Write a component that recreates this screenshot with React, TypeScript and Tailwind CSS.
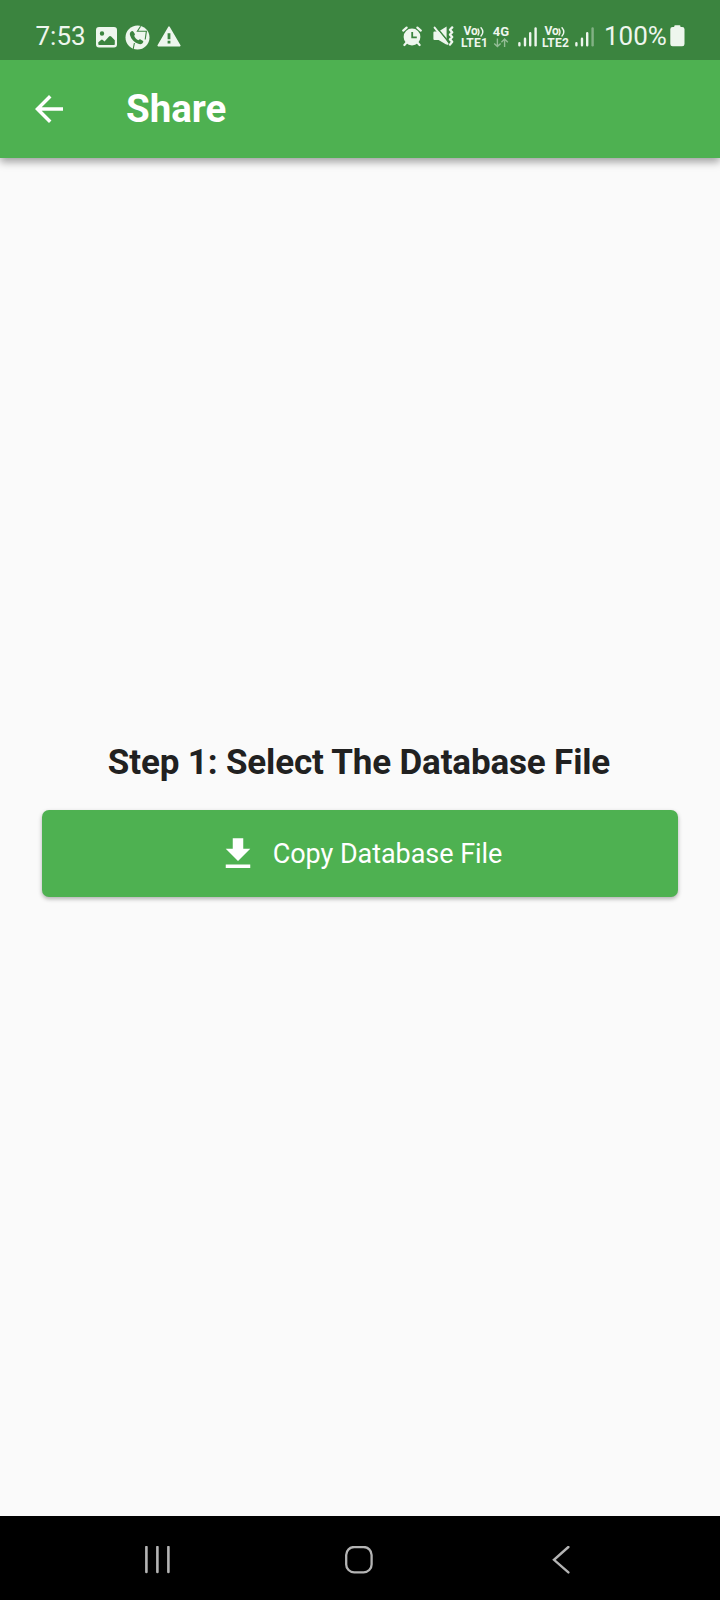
import React from 'react';

const ink = '#eef6ee';

function ImageIcon() {
  return (
    <svg width="21" height="21" viewBox="0 0 21 21" className="mt-[26.5px] ml-[12px] shrink-0">
      <path
        fill={ink}
        fillRule="evenodd"
        d="M3 0H18a3 3 0 0 1 3 3V17.5a3 3 0 0 1-3 3H3a3 3 0 0 1-3-3V3a3 3 0 0 1 3-3ZM6 4.3a2.2 2.2 0 1 0 0 4.4a2.2 2.2 0 0 0 0-4.4ZM2.3 15.2V17.2Q2.3 18 3.1 18H18Q18.8 18 18.8 17.2V13.2L15.2 9.6Q14 8.6 12.8 9.7L8.5 14.4L6.8 12.9Q5.9 12.2 5 13Z"
      />
    </svg>
  );
}

function CallIcon() {
  return (
    <svg width="25" height="25" viewBox="0 0 25 25" className="mt-[24.5px] ml-[8px] shrink-0">
      <circle cx="12.5" cy="12.5" r="12" fill={ink} />
      <path
        fill="#3b843f"
        transform="translate(0.8 0.4) scale(0.92)"
        d="M5.2 7.2C6.5 5.7 7.6 5.6 8.3 6.8L9.7 9.2C10.1 10 9.9 10.5 9.1 11.3C10 13.6 11.4 15.1 13.8 16.1C14.7 15.1 15.3 14.9 16 15.3L18.4 16.8C19.4 17.5 19.3 18.5 17.9 19.6C16.7 20.5 15.3 20.7 13.6 20C9 18.2 6 15 4.7 10.9C4.2 9.3 4.3 8.2 5.2 7.2Z"
      />
      <path
        d="M9.4 18L8.2 24M15.6 1.2L12.4 6.2H21.4L20.2 14.5"
        fill="none"
        stroke="#3b843f"
        strokeWidth="1.1"
      />
    </svg>
  );
}

function WarningIcon() {
  return (
    <svg width="24" height="21" viewBox="0 0 24 21" className="mt-[26.3px] ml-[7px] shrink-0">
      <path d="M12 1.2L22.8 19.6H1.2Z" fill={ink} stroke={ink} strokeWidth="1.6" strokeLinejoin="round" />
      <path d="M12 7.2V13.2M12 14.8V17.4" stroke="#3b843f" strokeWidth="2.8" />
    </svg>
  );
}

function AlarmIcon() {
  return (
    <svg width="20" height="21" viewBox="0 0 20 21" className="mt-[26px] shrink-0">
      <circle cx="10" cy="11" r="8.4" fill={ink} />
      <path
        d="M1.2 4.6L4.6 1.6M18.8 4.6L15.4 1.6M4.6 16.5L2.4 19M15.4 16.5L17.6 19"
        stroke={ink}
        strokeWidth="2.2"
        strokeLinecap="round"
      />
      <path d="M10.2 6V11.4H14.8" fill="none" stroke="#3b843f" strokeWidth="1.8" />
    </svg>
  );
}

function MuteIcon() {
  return (
    <svg width="21" height="21" viewBox="0 0 21 21" className="mt-[26.3px] ml-[10.5px] shrink-0">
      <path d="M0.4 6.6Q0.4 5.6 1.4 5.6H5.6L13.6 0.6V18.8L5.6 14H1.4Q0.4 14 0.4 13Z" fill={ink} />
      <path d="M3.4 1.2L15.2 15.4" stroke="#3b843f" strokeWidth="1.6" />
      <path d="M1.6 1.6L14.6 17.8" stroke={ink} strokeWidth="2" strokeLinecap="round" />
      <path
        d="M19.2 1.4L17 3.8L19.2 6.2L17 8.6L19.2 11L17 13.4L19.2 15.8L17 18.6"
        fill="none"
        stroke={ink}
        strokeWidth="2.3"
        strokeLinecap="round"
        strokeLinejoin="round"
      />
    </svg>
  );
}

function VoLte({ label }: { label: string }) {
  return (
    <div className="mt-[25.5px] flex w-[27px] shrink-0 flex-col items-center text-[12px] leading-[11px] font-bold whitespace-nowrap">
      <div className="flex h-[11px] items-start tracking-[-0.2px]">
        <span>Vo</span>
        <svg width="8" height="11" viewBox="0 0 8 11">
          <path
            d="M1 3Q3 6 1 9M4 1.8Q7.6 6 4 10"
            fill="none"
            stroke={ink}
            strokeWidth="1.4"
            strokeLinecap="round"
          />
        </svg>
      </div>
      <div className="mt-px h-[11px] tracking-[0.2px]">{label}</div>
    </div>
  );
}

function Signal({ faded }: { faded: boolean }) {
  return (
    <svg width="19" height="20" viewBox="0 0 19 20" className="mt-[26.8px] shrink-0">
      <g stroke={ink} strokeWidth="2.4" strokeLinecap="round">
        <path d="M1.4 16.2V18.2M7 11.8V18.2M12.2 6.2V18.2" />
        <path d="M17.6 1.4V18.2" opacity={faded ? 0.4 : 1} />
      </g>
    </svg>
  );
}

function StatusBar() {
  return (
    <div className="relative z-10 flex h-[60px] items-start bg-[#3b843f] pl-[35.5px] text-[#eef6ee]">
      <span className="mt-[21px] w-[48.5px] text-[26px] leading-[31px] whitespace-nowrap">7:53</span>
      <ImageIcon />
      <CallIcon />
      <WarningIcon />
      <div className="ml-auto flex items-start pr-[35px]">
        <AlarmIcon />
        <MuteIcon />
        <div className="ml-[7.5px]">
          <VoLte label="LTE1" />
        </div>
        <div className="mt-[25.5px] ml-[4.5px] flex w-[17px] flex-col items-center text-[13px] leading-[11px] font-bold">
          <span>4G</span>
          <svg width="16" height="10" viewBox="0 0 16 10" className="mt-px">
            <path
              d="M4.4 0.5V8.4M1.2 5.4L4.4 8.6L7.6 5.4M11.6 9V1.2M8.4 4.2L11.6 1L14.8 4.2"
              fill="none"
              stroke={ink}
              strokeWidth="1.4"
              opacity="0.5"
            />
          </svg>
        </div>
        <div className="ml-[8.5px]">
          <Signal faded={false} />
        </div>
        <div className="ml-[5px]">
          <VoLte label="LTE2" />
        </div>
        <div className="ml-[5.5px]">
          <Signal faded />
        </div>
        <span className="mt-[21px] ml-[10.5px] w-[62px] text-[26px] leading-[31px] whitespace-nowrap">100%</span>
        <svg width="15" height="22" viewBox="0 0 15 22" className="mt-[25.3px] ml-[4px] shrink-0">
          <path
            d="M4.2 2V1.4Q4.2 0.3 5.3 0.3H9.4Q10.5 0.3 10.5 1.4V2H12.2Q14.5 2 14.5 4.3V19Q14.5 21.3 12.2 21.3H2.6Q0.3 21.3 0.3 19V4.3Q0.3 2 2.6 2Z"
            fill={ink}
          />
        </svg>
      </div>
    </div>
  );
}

export default function App() {
  return (
    <div className="flex h-[1600px] w-[720px] flex-col overflow-hidden bg-[#fafafa] font-[Roboto,sans-serif]">
      <StatusBar />
      <header className="flex h-[98px] items-center bg-[#4eb151] pl-[28px] text-white shadow-[0_4px_8px_rgba(0,0,0,0.36)]">
        <svg width="42" height="42" viewBox="0 0 24 24" fill="currentColor">
          <path d="M20 11H7.83l5.59-5.59L12 4l-8 8 8 8 1.41-1.41L7.83 13H20v-2z" />
        </svg>
        <h1 className="ml-[56px] text-[38.5px] leading-[44px] font-bold">Share</h1>
      </header>
      <main className="flex flex-1 flex-col items-stretch px-[42px] pt-[584px]">
        <h2 className="pr-[2px] text-center text-[35px] leading-[42px] font-bold tracking-[-0.16px] whitespace-nowrap text-[#212121]">
          Step 1: Select The Database File
        </h2>
        <button className="mt-[26px] flex h-[87px] items-center justify-center rounded-[7px] bg-[#4eb151] pr-px text-white shadow-[0_2px_4px_rgba(0,0,0,0.3)]">
          <svg width="42" height="42" viewBox="0 0 24 24" fill="currentColor">
            <path d="M19 9h-4V3H9v6H5l7 7 7-7zM5 18v2h14v-2H5z" />
          </svg>
          <span className="ml-[14px] text-[27px] leading-[34px] tracking-[-0.05px] whitespace-nowrap">Copy Database File</span>
        </button>
      </main>
      <nav className="flex h-[84px] items-center bg-black pl-[144px]">
        <svg width="28" height="28" viewBox="0 0 28 28" className="mt-[3px]">
          <path d="M2.4 1V26M13.4 1V26M24.4 1V26" stroke="#b4b4b4" strokeWidth="2.6" strokeLinecap="round" />
        </svg>
        <svg width="28" height="28" viewBox="0 0 28 28" className="mt-[3px] ml-[172.5px]">
          <rect x="1.2" y="1" width="25.4" height="25.4" rx="8" fill="none" stroke="#b4b4b4" strokeWidth="2.3" />
        </svg>
        <svg width="18" height="28" viewBox="0 0 18 28" className="mt-[3px] ml-[179px]">
          <path d="M16.4 1L2 13.8L16.4 26.4" fill="none" stroke="#b4b4b4" strokeWidth="2.4" strokeLinecap="round" />
        </svg>
      </nav>
    </div>
  );
}
